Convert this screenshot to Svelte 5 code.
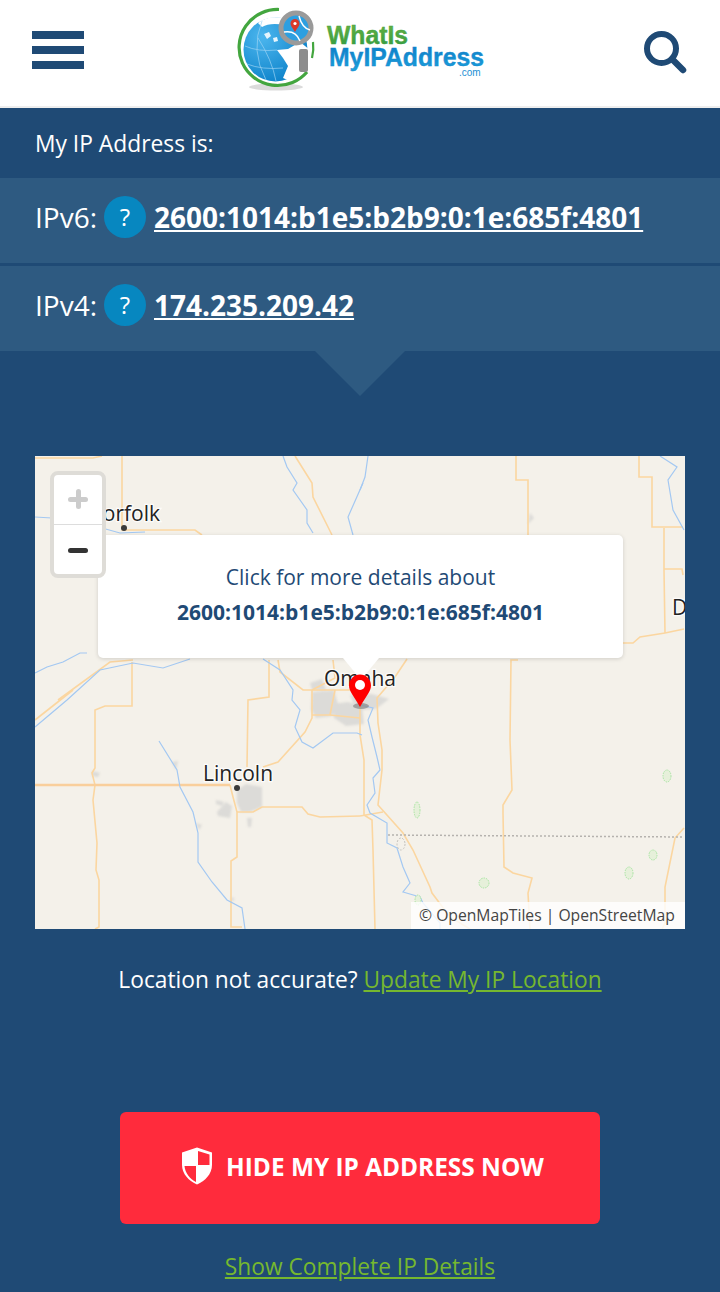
<script>
	// map traces, page-style coordinates (viewBox starts at 35,456)
	const roads = [
		'35,458 93,458 102,456',
		'122,456 122,530 195,530 202,535',
		'295,456 312,483 313,497 332,535',
		'58,700 110,662 133,660',
		'132,662 132,706 105,706 95,710 95,768 92,773 95,785 93,800 97,843 96,870 99,880 99,927 95,929',
		'35,720 73,690',
		'269,660 269,697 248,700 247,767',
		'278,660 280,672 303,690 352,690',
		'333,660 335,678 312,690',
		'312,690 312,718 305,732 278,762 263,767',
		'312,715 330,715 360,718',
		'335,690 330,715',
		'516,456 516,480 528,480 528,535',
		'639,456 639,477 652,477 652,527 683,527',
		'664,528 664,570 665,633',
		'664,569 682,569 683,575',
		'623,643 633,643 640,637 665,633 684,629',
		'407,659 395,677 377,698 378,723 382,750 382,770 378,805 403,833 413,850 430,887 432,893 450,917 470,929',
		'518,660 511,660 510,740 512,790 503,805 503,813 504,867 513,873 532,878 528,893 530,929',
		'684,828 675,838 665,887 665,923 662,929',
		'360,702 360,735 364,760 364,815 372,820 373,850 375,929',
		'360,816 383,812',
		'230,785 233,797 237,812 237,857 231,861 231,927 242,927',
		'237,812 253,812 262,807 302,807 308,814 320,817 360,816'
	];
	const rivers = [
		'283,456 287,467 297,483 293,490 307,510 307,523 313,533',
		'363,483 348,517 353,535',
		'368,456 365,477 360,490',
		'35,517 52,518 70,522 102,528 120,533 145,532',
		'35,673 47,667 63,662 80,653 87,653',
		'35,727 67,700 100,670 133,663 163,668 190,659',
		'263,659 280,670 293,690 292,700 300,710 295,727 302,742 313,748 333,733 357,733 362,735',
		'159,741 177,770 180,787 193,812 198,833 198,862 212,882 227,900 242,908 245,929',
		'660,456 677,467 668,480 673,510 684,530',
		'360,705 373,708 368,720 372,737 377,757 380,770 373,778 375,793 367,805 370,813 387,823 387,843 397,848 403,867 410,883 403,892 420,897 423,903 440,923 440,929'
	];
	const urban = [
		'237,790 246,784 262,787 262,807 250,812 241,812 237,803',
		'216,800 224,802 222,806 216,804',
		'217,812 226,802 232,806 230,818 218,816',
		'312,692 334,690 338,704 332,716 316,718 311,710',
		'310,683 322,679 326,690 312,690',
		'332,704 348,702 362,706 364,724 346,726 334,718',
		'350,695 372,694 389,699 376,709 356,710',
		'172,762 178,761 176,770',
		'92,771 100,773 98,777 92,776',
		'196,823 202,825 199,830',
		'247,818 252,818 251,827 248,827',
		'530,513 534,518 528,524',
		'231,897 235,899 231,902'
	];
	const parks = [
		[417, 810, 3, 8],
		[484, 883, 5, 5],
		[667, 776, 4, 6],
		[653, 855, 4, 5],
		[629, 873, 4, 6],
		[418, 900, 3, 5]
	];
</script>

<div class="page">
	<header class="topbar">
		<div class="burger"><span></span><span></span><span></span></div>
		<svg class="logo" viewBox="236 5 250 90" width="250" height="90">
			<defs>
				<radialGradient id="sea" cx="0.3" cy="0.3" r="0.8">
					<stop offset="0" stop-color="#4cb6ee" />
					<stop offset="1" stop-color="#0a80c8" />
				</radialGradient>
				<linearGradient id="green" x1="0" y1="0" x2="0" y2="1">
					<stop offset="0" stop-color="#6cb33f" />
					<stop offset="1" stop-color="#2f9a44" />
				</linearGradient>
				<linearGradient id="blue" x1="0" y1="0" x2="0" y2="1">
					<stop offset="0" stop-color="#0c79c4" />
					<stop offset="1" stop-color="#1da2dc" />
				</linearGradient>
			</defs>
			<ellipse cx="276" cy="87" rx="27" ry="3.500" fill="#ccc" opacity="0.7" />
			<circle cx="275.500" cy="49.500" r="32" fill="url(#sea)" />
			<path d="M258 23 Q268 15 282 18 L285 25 Q270 22 262 27z" fill="#fff" />
			<path d="M264 34 l5 -2 l2 4 l-4 3z M273 38 l4 -1 l1 4 l-4 1z" fill="#e6f5fd" />
			<path d="M277 50 L288 49 L300 42 L310 50 L307 68 L290 81 L283 78 L288 66 L283 58z" fill="#fff" />
			<path d="M245 46 Q258 52 277 50 M247 64 Q262 70 283 68 M262 21 Q250 50 266 80 M258 38 Q272 60 276 81" fill="none" stroke="#9bd3f3" stroke-width="0.7" />
			<path d="M279 9.500 A38.500 38 0 1 0 307 72" fill="none" stroke="#43a63f" stroke-width="3.200" />
			<path d="M313 42 Q314 50 312 58" fill="none" stroke="#43a63f" stroke-width="2.200" />
			<circle cx="296" cy="28" r="15" fill="#2d9fe0" stroke="#9a9a9a" stroke-width="5" />
			<path d="M284 32 Q296 30 300 41 M299 16 Q302 28 310 30" fill="none" stroke="#fff" stroke-width="1.400" />
			<path d="M295 32 c-3 -5 -4.500 -6.500 -4.500 -8.500 a4.500 4.500 0 0 1 9 0 c0 2 -1.500 3.500 -4.500 8.500z" fill="#d9392b" />
			<circle cx="295" cy="23.500" r="1.600" fill="#fff" />
			<rect x="299" y="49" width="9" height="23" rx="2" fill="#8d8d8d" />
			<text class="logo-word" x="327" y="44" font-size="25" fill="url(#green)" stroke="#3fa243" stroke-width="0.4" textLength="81" lengthAdjust="spacingAndGlyphs">WhatIs</text>
			<text class="logo-word" x="329" y="66" font-size="26" fill="url(#blue)" stroke="#1288cf" stroke-width="0.4" textLength="155" lengthAdjust="spacingAndGlyphs">MyIPAddress</text>
			<text class="logo-com" x="459" y="76" font-size="10" fill="#1d8fd4">.com</text>
		</svg>
		<svg class="search" viewBox="0 0 44 44" width="44" height="44">
			<circle cx="18.500" cy="18.500" r="14.500" fill="none" stroke="#1f4a75" stroke-width="6" />
			<path d="M29 29 L40 40" stroke="#1f4a75" stroke-width="6.500" stroke-linecap="round" />
		</svg>
	</header>

	<section class="ip-panel">
		<p class="ip-title">My IP Address is:</p>
		<div class="ip-row">
			<span class="ip-label">IPv6:</span>
			<span class="help">?</span>
			<a class="ip-value" href="#v6">2600:1014:b1e5:b2b9:0:1e:685f:4801</a>
		</div>
		<div class="ip-row">
			<span class="ip-label">IPv4:</span>
			<span class="help">?</span>
			<a class="ip-value" href="#v4">174.235.209.42</a>
		</div>
		<div class="notch"></div>
	</section>

	<div class="map">
		<svg class="tiles" viewBox="35 456 650 473" width="650" height="473">
			<g class="blur-more">
				{#each urban as pts}
					<polygon points={pts} fill="#dcdbd8" />
				{/each}
			</g>
			<g class="soft">
				{#each roads as pts}
					<polyline points={pts} fill="none" stroke="#fbd6a0" stroke-width="1.600" />
				{/each}
				<polyline points="35,785 230,785" fill="none" stroke="#f9cf9c" stroke-width="2.500" />
				{#each rivers as pts}
					<polyline points={pts} fill="none" stroke="#a3c8f2" stroke-width="1.200" />
				{/each}
				<polyline points="388,835 684,837" fill="none" stroke="#b5b2ae" stroke-width="1.500" stroke-dasharray="2 2" />
				<ellipse cx="401" cy="844" rx="4" ry="6" fill="none" stroke="#c4c2bd" stroke-dasharray="2 1.500" />
				{#each parks as [x, y, rx, ry]}
					<ellipse cx={x} cy={y} {rx} {ry} fill="#e6f0da" stroke="#a6e3a0" stroke-dasharray="1.500 1" />
				{/each}
			</g>
			<circle cx="124" cy="528" r="3" fill="#3a3a3a" />
			<circle cx="237" cy="788" r="3" fill="#3a3a3a" />
			<ellipse cx="361" cy="706" rx="8" ry="3" fill="#888" opacity="0.7" />
			<text class="place" x="87" y="521">Norfolk</text>
			<text class="place" x="324" y="686">Omaha</text>
			<text class="place" x="203" y="781">Lincoln</text>
			<text class="place" x="672" y="615">D</text>
		</svg>

		<div class="popup">
			<p>Click for more details about</p>
			<p class="popup-ip">2600:1014:b1e5:b2b9:0:1e:685f:4801</p>
		</div>
		<div class="popup-tip"></div>

		<div class="zoom">
			<div class="zoom-btn plus"></div>
			<div class="zoom-btn minus"></div>
		</div>

		<svg class="pin" viewBox="0 0 24 33" width="24" height="33">
			<path d="M12 33 C5 21 1 17 1 11.500 a11 11 0 0 1 22 0 C23 17 19 21 12 33z" fill="#f00" />
			<circle cx="12" cy="11" r="5" fill="#fff" />
		</svg>

		<div class="attribution">© OpenMapTiles | OpenStreetMap</div>
	</div>

	<p class="accuracy">Location not accurate? <a href="#update">Update My IP Location</a></p>

	<a class="hide-btn" href="#hide">
		<svg viewBox="0 0 32 38" width="32" height="38">
			<path d="M16 0.500 L31 5.500 V18 C31 27 24 34 16 37.500 C8 34 1 27 1 18 V5.500z" fill="#fff" />
			<path d="M17 4 L28.500 7.500 V18 H17z M15 19 H3.500 C4 26 9 32 15 35z" fill="#ff2b3c" />
		</svg>
		<span>HIDE MY IP ADDRESS NOW</span>
	</a>

	<p class="details"><a href="#details">Show Complete IP Details</a></p>
</div>

<style>
	:global(body) {
		margin: 0;
		background: #1f4a75;
	}

	p {
		margin: 0;
	}

	.page {
		width: 720px;
		height: 1292px;
		overflow: hidden;
		font-family: "Open Sans", sans-serif;
		color: #fff;
		background: #1f4a75;
	}

	.topbar {
		display: flex;
		align-items: center;
		justify-content: space-between;
		box-sizing: border-box;
		height: 108px;
		padding: 0 33px 2px 32px;
		background: #fff;
		border-bottom: 2px solid #eee;
	}

	.burger {
		display: flex;
		flex-direction: column;
		gap: 7px;
		width: 52px;
		margin-top: -4px;
	}

	.burger span {
		height: 8px;
		background: #1f4a75;
	}

	.logo {
		align-self: flex-start;
		margin: 5px 6px 0 0;
	}

	.logo-word {
		font-family: "Liberation Sans", sans-serif;
		font-weight: 700;
	}

	.logo-com {
		font-family: "Liberation Sans", sans-serif;
	}

	.ip-panel {
		position: relative;
		height: 348px;
	}

	.ip-title {
		padding: 0 35px;
		height: 70px;
		line-height: 72px;
		font-size: 22.800px;
	}

	.ip-row {
		display: flex;
		align-items: center;
		box-sizing: border-box;
		height: 85px;
		margin-bottom: 3px;
		padding: 0 35px 8px;
		background: #2e5a81;
	}

	.ip-label {
		width: 62px;
		font-size: 28px;
		white-space: nowrap;
	}

	.help {
		display: flex;
		align-items: center;
		justify-content: center;
		width: 42px;
		height: 42px;
		margin: 0 8px 0 7px;
		border-radius: 50%;
		background: #0787c0;
		font-size: 24px;
	}

	.ip-value {
		color: #fff;
		font-size: 28px;
		font-weight: 700;
		text-decoration: underline;
	}

	.notch {
		position: absolute;
		left: 315px;
		top: 240px;
		width: 0;
		height: 0;
		border-left: 45px solid transparent;
		border-right: 45px solid transparent;
		border-top: 45px solid #2e5a81;
		margin-top: 3px;
	}

	.map {
		position: relative;
		width: 650px;
		height: 473px;
		margin-left: 35px;
		background: #f4f1ea;
		overflow: hidden;
	}

	.tiles {
		display: block;
	}

	.soft {
		filter: blur(0.5px);
	}

	.blur-more {
		filter: blur(1.2px);
	}

	.place {
		font-size: 21px;
		fill: #222;
		stroke: #fff;
		stroke-width: 2.500px;
		stroke-opacity: 0.8;
		paint-order: stroke;
	}

	.zoom {
		position: absolute;
		left: 15px;
		top: 15px;
		width: 48px;
		height: 99px;
		border: 4px solid #dedcd7;
		border-radius: 8px;
		background: #fff;
	}

	.zoom-btn {
		position: relative;
		height: 49px;
	}

	.minus {
		border-top: 1px solid #ddd;
	}

	.plus::before,
	.plus::after,
	.minus::before {
		content: '';
		position: absolute;
		left: 14px;
		top: 21.500px;
		width: 20px;
		height: 5px;
		border-radius: 3px;
		background: #ccc;
	}

	.plus::after {
		left: 21.500px;
		top: 14px;
		width: 5px;
		height: 20px;
	}

	.minus::before {
		top: 23px;
		background: #333;
	}

	.popup {
		position: absolute;
		left: 63px;
		top: 79px;
		box-sizing: border-box;
		width: 525px;
		height: 123px;
		padding-top: 25px;
		border-radius: 5px;
		background: #fff;
		box-shadow: 0 1px 4px rgba(0, 0, 0, 0.15);
		color: #1f4a75;
		font-size: 21px;
		line-height: 35px;
		text-align: center;
	}

	.popup-ip {
		font-weight: 700;
	}

	.popup-tip {
		position: absolute;
		left: 308px;
		top: 202px;
		width: 0;
		height: 0;
		border-left: 18px solid transparent;
		border-right: 18px solid transparent;
		border-top: 22px solid #fff;
	}

	.pin {
		position: absolute;
		left: 313px;
		top: 218px;
	}

	.attribution {
		position: absolute;
		right: 0;
		bottom: 0;
		box-sizing: border-box;
		width: 274px;
		height: 27px;
		padding-left: 8px;
		background: rgba(255, 255, 255, 0.8);
		color: #444;
		font-size: 15.700px;
		line-height: 27px;
		white-space: nowrap;
	}

	.accuracy {
		margin-top: 34px;
		font-size: 22.750px;
		line-height: 34px;
		text-align: center;
	}

	a {
		color: #76b82f;
	}

	.hide-btn {
		display: flex;
		align-items: center;
		justify-content: center;
		gap: 13px;
		box-sizing: border-box;
		width: 480px;
		height: 112px;
		margin: 115px 0 0 120px;
		padding: 0 0 4px 5px;
		border-radius: 6px;
		background: #ff2b3c;
		color: #fff;
		font-size: 24.400px;
		font-weight: 700;
		text-decoration: none;
	}

	.details {
		margin-top: 26px;
		font-size: 22.750px;
		line-height: 34px;
		text-align: center;
	}
</style>
